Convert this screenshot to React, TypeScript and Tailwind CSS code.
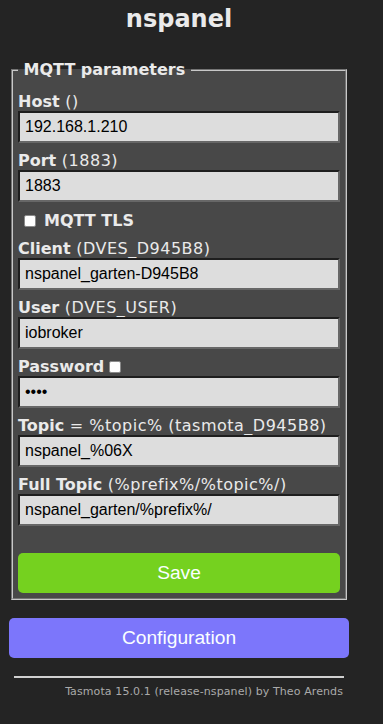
import React from 'react';

type FieldProps = {
  label: string;
  hint?: string;
  value: string;
  checkbox?: boolean;
};

function Checkbox({ className = '' }: { className?: string }) {
  return (
    <span className={`inline-block h-[12px] w-[12px] rounded-[2px] border border-[#8a8a8a] bg-white ${className}`} />
  );
}

function Field({ label, hint, value, checkbox }: FieldProps) {
  return (
    <div className="mt-[8px] flex flex-col">
      <div className="flex items-center whitespace-nowrap leading-[19px]">
        <b>{label}</b>
        {hint && <span className="tracking-[0.5px]">&nbsp;{hint}</span>}
        {checkbox && <Checkbox className="ml-[5px]" />}
      </div>
      <div className="flex h-[32px] items-center border-2 border-t-[#1e1e1e] border-l-[#1e1e1e] border-b-[#676767] border-r-[#676767] bg-[#dddddd] px-[5px] font-['Liberation_Sans',Arial,sans-serif] text-[16px] text-black">
        {value}
      </div>
    </div>
  );
}

export default function App() {
  return (
    <div className="min-h-screen bg-[#242424] font-['DejaVu_Sans',Verdana,sans-serif] text-[16px] text-[#eaeaea]">
      <div className="ml-[9px] w-[340px] pt-[5px]">
        <h2 className="text-center text-[24px] font-bold leading-[28px]">nspanel</h2>

        <fieldset className="mx-[2px] mt-[27px] border-2 border-[#c8c8c8] bg-[#484848] px-[5px] pb-[5px] pt-[5px] [border-style:groove]">
          <legend className="font-bold leading-[19px]">&nbsp;MQTT parameters&nbsp;</legend>

          <Field label="Host" hint="()" value="192.168.1.210" />
          <Field label="Port" hint="(1883)" value="1883" />

          <div className="mt-[8px] flex h-[21px] items-center">
            <Checkbox className="ml-[6px]" />
            <b className="ml-[8px]">MQTT TLS</b>
          </div>

          <Field label="Client" hint="(DVES_D945B8)" value="nspanel_garten-D945B8" />
          <Field label="User" hint="(DVES_USER)" value="iobroker" />
          <Field label="Password" value="••••" checkbox />
          <Field label="Topic" hint="= %topic% (tasmota_D945B8)" value="nspanel_%06X" />
          <Field label="Full Topic" hint="(%prefix%/%topic%/)" value="nspanel_garten/%prefix%/" />

          <button className="mt-[27px] h-[40px] w-full rounded-[5px] bg-[#75d11f] font-['Liberation_Sans',Arial,sans-serif] text-[19.2px] text-[#faffff]">
            Save
          </button>
        </fieldset>

        <button className="mt-[18px] h-[40px] w-full rounded-[5px] bg-[#7c76fb] font-['Liberation_Sans',Arial,sans-serif] text-[19.2px] text-[#faffff]">
          Configuration
        </button>

        <div className="mx-[5px] mt-[18px] h-[2px] bg-[#d0d0d0]" />
        <div className="mr-[6px] mt-[6px] text-right text-[11px] tracking-[0.1px] text-[#aaaaaa]">
          Tasmota 15.0.1 (release-nspanel) by Theo Arends
        </div>
      </div>
    </div>
  );
}
